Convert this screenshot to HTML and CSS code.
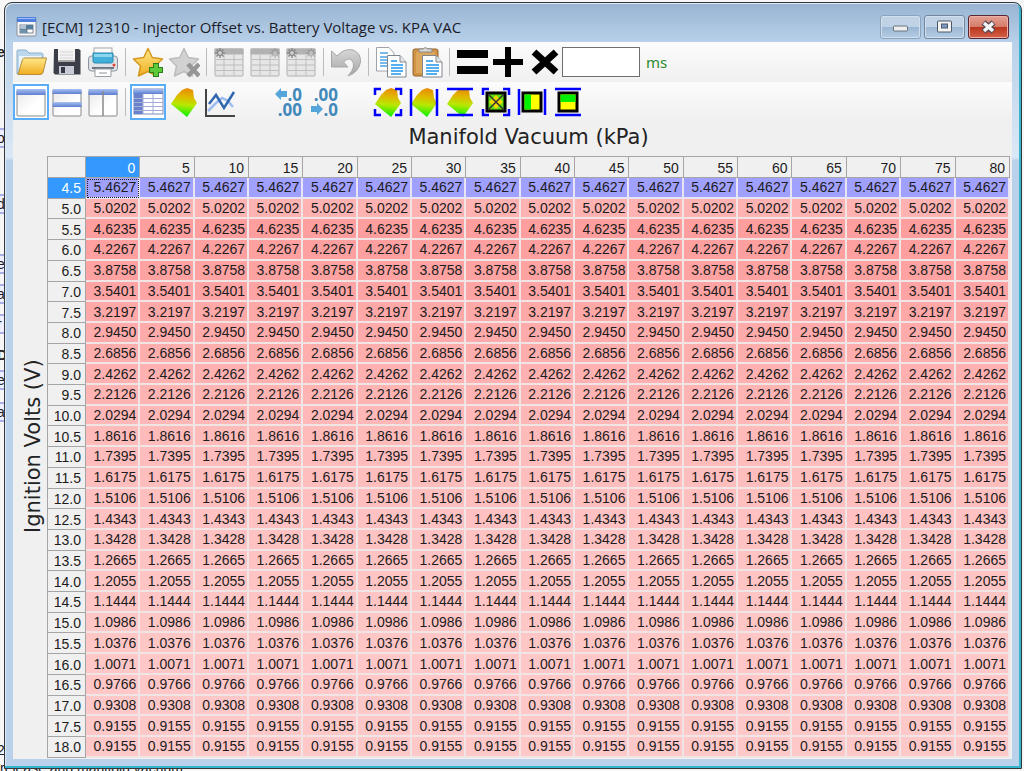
FILE: index.html
```
<!DOCTYPE html>
<html lang="en">
<head>
<meta charset="utf-8">
<title>[ECM] 12310 - Injector Offset vs. Battery Voltage vs. KPA VAC</title>
<link rel="stylesheet" href="styles.css">
</head>
<body>
<svg class="defs" aria-hidden="true">
  <defs>
    <linearGradient id="surf" x1="0.6" y1="0" x2="0.5" y2="1"><stop offset="0" stop-color="#e88a00"/><stop offset=".3" stop-color="#e0b800"/><stop offset=".58" stop-color="#b8e800"/><stop offset="1" stop-color="#00f000"/></linearGradient>
    <linearGradient id="gold" x1="0" y1="0" x2="0" y2="1"><stop offset="0" stop-color="#ffe98a"/><stop offset="1" stop-color="#f0ac20"/></linearGradient>
    <linearGradient id="blue" x1="0" y1="0" x2="0" y2="1"><stop offset="0" stop-color="#a9c0f2"/><stop offset="1" stop-color="#5d7fd0"/></linearGradient>
    <linearGradient id="grey" x1="0" y1="0" x2="0" y2="1"><stop offset="0" stop-color="#d8d8d8"/><stop offset="1" stop-color="#a4a4a4"/></linearGradient>
    <linearGradient id="page" x1="0" y1="0" x2="1" y2="1"><stop offset="0" stop-color="#e9e9e9"/><stop offset=".6" stop-color="#fff"/></linearGradient>
    <symbol id="surface" viewBox="0 0 32 32"><path d="M14 4 19 2 25 4 26 12 29 17 19 31 3 18 9 9Z" fill="url(#surf)"/></symbol>
    <symbol id="graygrid" viewBox="0 0 32 32"><rect x="2" y="3" width="28" height="27" rx="1" fill="#e6e6e6" stroke="#b0b0b0"/><rect x="1.500" y="2.500" width="29" height="6" fill="#b2b2b2"/><path d="M2 13.500H30M2 19H30M2 24.500H30M11 9V30M21 9V30" stroke="#bebebe" fill="none"/></symbol>
    <symbol id="spark" viewBox="0 0 12 12"><path d="M6 1V11M1 6H11M2.500 2.500 9.500 9.500M9.500 2.500 2.500 9.500" stroke="#8a8a8a" stroke-width="1.500"/><circle cx="6" cy="6" r="2.500" fill="#ccc" stroke="#808080"/></symbol>
    <symbol id="corners" viewBox="0 0 32 32"><path d="M3 9V3H9M23 3H29V9M29 23V29H23M9 29H3V23" fill="none" stroke="#0000ff" stroke-width="2.500"/></symbol>
  </defs>
</svg>

<div class="backdrop" aria-hidden="true">
  <span class="frag f1">e</span><span class="frag box f2">o</span><span class="frag box f3">d</span><span class="frag box f4">e</span><span class="frag box f5">a</span><span class="frag box f6">r</span><span class="frag f7">D</span><span class="frag box f8">e</span><span class="frag box f9">a</span><span class="frag f10">2</span>
  <span class="frag foot">release and manifold vacuum.</span>
</div>

<div class="window">
  <header class="titlebar">
    <svg class="appicon" viewBox="0 0 22 20"><rect x="1" y="1" width="19" height="18" rx="1" fill="#f4f6fa" stroke="#8a9098"/><rect x="1" y="0" width="19" height="5" fill="#4f7fdc"/><rect x="2" y="1" width="17" height="1" fill="#9fc0f8"/><rect x="4" y="8" width="13" height="8" fill="#fff" stroke="#7a8694"/><rect x="5" y="9" width="5" height="2" fill="#a7c4da"/><rect x="10" y="8" width="7" height="4" fill="#4f7e9e"/><rect x="4" y="12" width="7" height="4" fill="#6d93ad"/><path d="M4 12H17M11 8V16" stroke="#60788c"/></svg>
    <h1 class="title">[ECM] 12310 - Injector Offset vs. Battery Voltage vs. KPA VAC</h1>
    <div class="caption">
      <button class="cap" aria-label="Minimize"><svg viewBox="0 0 38 22"><rect x="12" y="10" width="14" height="5" rx="1" fill="#eee" stroke="#68727e"/></svg></button>
      <button class="cap" aria-label="Maximize"><svg viewBox="0 0 38 22"><rect x="12" y="5" width="14" height="11" rx="1" fill="#f4f4f4" stroke="#4e5968"/><rect x="16" y="8" width="6" height="4" fill="#7b9cc0" stroke="#4e5968"/></svg></button>
      <button class="cap close" aria-label="Close"><svg viewBox="0 0 38 22"><path d="M14 6.500 24 15.500M24 6.500 14 15.500" stroke="#5a4a55" stroke-width="6"/><path d="M14.500 7 23.500 15M23.500 7 14.500 15" stroke="#f4f4f4" stroke-width="3.500"/></svg></button>
    </div>
  </header>

  <main class="client">
    <div class="toolbar">
      <button class="tool" aria-label="Open"><svg viewBox="0 0 32 32"><path d="M2 28V5Q2 4 3 4H11L14 7H26Q28 7 28 9V26Z" fill="#bcd8ee" stroke="#8badc9"/><path d="M4 10H26V24H4Z" fill="#eaf4fb"/><path d="M3 28.500 7.500 13.500Q8 12 9.500 12H31.500L28 26.500Q27.500 28.500 25 28.500Z" fill="url(#gold)" stroke="#b78b38"/></svg></button>
      <button class="tool" aria-label="Save"><svg viewBox="0 0 32 32"><path d="M3 3H28L29.500 4.500V28.500H4L2.500 27Z" fill="#3c3f47"/><rect x="7" y="3" width="17" height="13" fill="#f4f4f4"/><path d="M9 6H22M9 9H22M9 12H22" stroke="#d4d4d4"/><path d="M7 14H24V16H7Z" fill="#aaa"/><rect x="8" y="20" width="15" height="8" fill="#c9ccd4"/><rect x="10" y="21" width="4" height="6" fill="#363944"/></svg></button>
      <button class="tool" aria-label="Print"><svg viewBox="0 0 32 32"><rect x="7" y="2" width="18" height="10" fill="#fafafa" stroke="#a8a8a8"/><rect x="1.500" y="10" width="29" height="15" rx="3" fill="#dfe2e6" stroke="#8c949e"/><path d="M6 7H26V15Q26 17 24 17H8Q6 17 6 15Z" fill="#42b0d8" stroke="#298aae"/><path d="M7 8H25V11H7Z" fill="#8bd5ef"/><circle cx="27" cy="19" r="1.500" fill="#e04030"/><path d="M5 22H27" stroke="#6b7480" stroke-width="2"/><path d="M8 23H24V30.500H8Z" fill="#fff" stroke="#9a9fa6"/><path d="M12 27H20" stroke="#8c949e"/></svg></button>
      <span class="sep"></span>
      <button class="tool" aria-label="Add favorite"><svg viewBox="0 0 32 32"><path d="M16 2.500 20.300 11.500 30.500 13 23 20 24.500 30 16 25.500 6.500 30 8.500 20 1.500 13 11.700 11.500Z" fill="url(#gold)" stroke="#d49a20" stroke-width="1.500" stroke-linejoin="round"/><path d="M24 17V31M17 24H31" stroke="#2b7d1c" stroke-width="6"/><path d="M24 18V30M18 24H30" stroke="#5cc83a" stroke-width="4"/></svg></button>
      <button class="tool" aria-label="Remove favorite"><svg viewBox="0 0 32 32"><path d="M16 2.500 20.300 11.500 30.500 13 23 20 24.500 30 16 25.500 6.500 30 8.500 20 1.500 13 11.700 11.500Z" fill="#d2d2d2" stroke="#bcbcbc" stroke-width="1.500" stroke-linejoin="round"/><path d="M20 18 31 30M31 18 20 30" stroke="#969696" stroke-width="4.500"/></svg></button>
      <span class="sep"></span>
      <button class="tool" aria-label="Insert before"><svg viewBox="0 0 32 32"><use href="#graygrid"/><use href="#spark" x="1" y="1" width="12" height="12"/></svg></button>
      <button class="tool" aria-label="Insert after"><svg viewBox="0 0 32 32"><use href="#graygrid"/><use href="#spark" x="20" y="1" width="12" height="12" opacity=".5"/></svg></button>
      <button class="tool" aria-label="Insert both"><svg viewBox="0 0 32 32"><use href="#graygrid"/><use href="#spark" x="1" y="1" width="12" height="12"/><use href="#spark" x="20" y="1" width="12" height="12" opacity=".5"/></svg></button>
      <span class="sep"></span>
      <button class="tool" aria-label="Undo"><svg viewBox="0 0 32 32"><path d="M1.500 5 7 10Q14 2 23 4 31 7 30.500 16 29 26 18 30 27 20 21.500 14 18 11.500 13.500 16L18 21H1.500Z" fill="url(#grey)" stroke="#a8a8a8"/></svg></button>
      <span class="sep"></span>
      <button class="tool" aria-label="Copy"><svg viewBox="0 0 32 32"><path d="M1.500 1.500H14L19 7V25H1.500Z" fill="#fff" stroke="#a0a4aa"/><path d="M5 7H13M5 11H16M5 14H16M5 17H14M5 20H14" stroke="#78b8e8" stroke-width="2"/><path d="M12.500 9.500H25L31 16V31H12.500Z" fill="#fff" stroke="#80868e"/><path d="M25 9.500V16H31" fill="#e4e6e8" stroke="#80868e"/><path d="M16 15H22M16 19H28M16 22H28M16 25H28M16 28H26" stroke="#55aef0" stroke-width="2"/></svg></button>
      <button class="tool" aria-label="Paste"><svg viewBox="0 0 32 32"><rect x="2" y="3" width="25" height="27" rx="2" fill="#cf9446" stroke="#94622a"/><rect x="5" y="6" width="19" height="21" fill="#dba75c"/><path d="M8 6V3H12Q14 0 17 3H21V6Z" fill="#d8d8d8" stroke="#888"/><path d="M11.500 9.500H25L31 16V31H11.500Z" fill="#fff" stroke="#80868e"/><path d="M25 9.500V16H31" fill="#e4e6e8" stroke="#80868e"/><path d="M15 15H22M15 19H28M15 22H28M15 25H28M15 28H26" stroke="#55aef0" stroke-width="2"/></svg></button>
      <span class="sep"></span>
      <button class="tool" aria-label="Set equal"><svg viewBox="0 0 32 32"><path d="M1 4H32V12H1ZM1 20H32V28H1Z"/></svg></button>
      <button class="tool" aria-label="Add"><svg viewBox="0 0 32 32"><path d="M13 1H19V13H31V19H19V31H13V19H1V13H13Z"/></svg></button>
      <button class="tool" aria-label="Multiply"><svg viewBox="0 0 32 32"><path d="M6 6 28 26M28 6 6 26" stroke="#000" stroke-width="7"/></svg></button>
      <input class="amount" id="amount" type="text">
      <label class="unit" for="amount">ms</label>
    </div>

    <div class="toolbar views">
      <button class="tool on" aria-label="Single pane"><svg viewBox="0 0 32 32"><rect x="2" y="4" width="28" height="26" rx="1" fill="url(#page)" stroke="#888"/><rect x="1.500" y="3" width="29" height="6" fill="url(#blue)"/></svg></button>
      <button class="tool" aria-label="Horizontal panes"><svg viewBox="0 0 32 32"><rect x="2" y="4" width="28" height="26" rx="1" fill="url(#page)" stroke="#888"/><rect x="1.500" y="3" width="29" height="5" fill="url(#blue)"/><rect x="1.500" y="16" width="29" height="5" fill="url(#blue)"/></svg></button>
      <button class="tool" aria-label="Vertical panes"><svg viewBox="0 0 32 32"><rect x="2" y="4" width="28" height="26" rx="1" fill="url(#page)" stroke="#888"/><rect x="1.500" y="3" width="29" height="6" fill="url(#blue)"/><path d="M16 5V30" stroke="#888" stroke-width="1.500"/></svg></button>
      <span class="sep"></span>
      <button class="tool on" aria-label="Table view"><svg viewBox="0 0 32 32"><rect x="2" y="3" width="29" height="25" fill="#fff" stroke="#7d87b8"/><path d="M1.500 3H31V8H1.500Z" fill="url(#blue)"/><path d="M2 8H11V28H2Z" fill="#6a82cc"/><path d="M2 12.500H31M2 16.500H31M2 20.500H31M2 24.500H31M11 8V28M21 8V28" stroke="#a4acd4"/></svg></button>
      <button class="tool" aria-label="Surface view"><svg viewBox="0 0 32 32"><use href="#surface"/></svg></button>
      <button class="tool" aria-label="Chart view"><svg viewBox="0 0 32 32"><path d="M4 25 12 17 18 12 24 15 29 21" fill="none" stroke="#9dbdf0" stroke-width="2.500"/><path d="M5 18 12 9 20 22 30 6" fill="none" stroke="#2f66ae" stroke-width="2.500"/><path d="M2 3V30H31" fill="none" stroke="#444" stroke-width="2"/></svg></button>
      <span class="gap"></span>
      <button class="tool decimals" aria-label="Fewer decimals"><span><svg class="arrow" viewBox="0 0 12 12"><path d="M0 6 6 0V3H12V9H6V12Z" fill="#56a5da"/></svg>.0</span><span>.00</span></button>
      <button class="tool decimals" aria-label="More decimals"><span>.00</span><span><svg class="arrow" viewBox="0 0 12 12"><path d="M12 6 6 0V3H0V9H6V12Z" fill="#56a5da"/></svg>.0</span></button>
      <span class="gap"></span>
      <button class="tool" aria-label="Smooth all"><svg viewBox="0 0 32 32"><use href="#surface"/><use href="#corners"/></svg></button>
      <button class="tool" aria-label="Smooth across"><svg viewBox="0 0 32 32"><use href="#surface"/><path d="M3 3V30M29 3V30" stroke="#0000ff" stroke-width="2.500"/></svg></button>
      <button class="tool" aria-label="Smooth down"><svg viewBox="0 0 32 32"><use href="#surface"/><path d="M3 3H29M3 29H29" stroke="#0000ff" stroke-width="2.500"/></svg></button>
      <button class="tool" aria-label="Interpolate all"><svg viewBox="0 0 32 32"><use href="#corners"/><rect x="7" y="7" width="18" height="18" fill="#60e010" stroke="#000" stroke-width="3"/><path d="M16 9 23 16 16 23 9 16Z" fill="#f0d800"/><path d="M8 8 24 24M24 8 8 24" stroke="#333" stroke-width="1.500"/></svg></button>
      <button class="tool" aria-label="Interpolate across"><svg viewBox="0 0 32 32"><path d="M3 3V29M29 3V29" stroke="#0000ff" stroke-width="2.500"/><rect x="7" y="7" width="18" height="18" fill="#ff0" stroke="#000" stroke-width="3"/><path d="M8.500 8.500H15V23.500H8.500Z" fill="#00f000"/></svg></button>
      <button class="tool" aria-label="Interpolate down"><svg viewBox="0 0 32 32"><path d="M3 3H29M3 29H29" stroke="#0000ff" stroke-width="2.500"/><rect x="7" y="7" width="18" height="18" fill="#ff0" stroke="#000" stroke-width="3"/><path d="M8.500 8.500H23.500V16H8.500Z" fill="#00f000"/></svg></button>
    </div>

    <div class="sheet">
      <div class="yaxis">Ignition Volts (V)</div>
      <div class="plot">
        <h2 class="xaxis">Manifold Vacuum (kPa)</h2>
        <table class="grid">
          <colgroup id="cols"><col class="rowhead"></colgroup>
          <thead><tr id="head"><td class="corner"></td></tr></thead>
          <tbody id="body"></tbody>
        </table>
      </div>
    </div>
  </main>
</div>
<script src="table.js"></script>
</body>
</html>
```
FILE: styles.css
```
* { box-sizing: border-box; }

body {
  margin: 0;
  height: 100vh;
  padding: 2px 2px 2px 4px;
  background: #f6f6f6;
  font-family: "Liberation Sans", Arial, sans-serif;
  overflow: hidden;
}

.defs { position: absolute; width: 0; height: 0; }

/* Sliver of the parent window that shows past the frame */
.backdrop { position: absolute; inset: 0; overflow: hidden; z-index: -1; font-size: 14px; color: #222; }
.frag { position: absolute; left: -3px; height: 20px; line-height: 20px; }
.box { width: 12px; background: #eef0ff; border: solid #a9aee6; border-width: 2px 0; line-height: 16px; }
.f1 { top: 42px; font-weight: bold; }
.f2 { top: 128px; }
.f3 { top: 194px; }
.f4 { top: 254px; }
.f5 { top: 284px; }
.f6 { top: 314px; }
.f7 { top: 345px; font-weight: bold; }
.f8 { top: 370px; }
.f9 { top: 402px; }
.f10 { top: 740px; }
.foot { left: 0; top: 758px; }

.window {
  height: 100%;
  display: flex;
  flex-direction: column;
  padding: 0 9px 9px 8px;
  border: 1px solid #33383c;
  border-radius: 8px 8px 0 0;
  background: linear-gradient(#98b4d2, #b9d1ea 40px, #c9dcef 90px, #dbe8f6 154px, #b9d1ea 158px);
  box-shadow: inset -2px -2px 0 #35b4cc, inset 1px 1px 0 #dfeaf5;
}

.titlebar { flex: none; height: 39px; display: flex; align-items: center; padding: 8px 3px 0 3px; }
.appicon { width: 22px; height: 20px; flex: none; }
.title {
  flex: 1;
  margin: 0 0 0 4px;
  font: 15px/20px "Open Sans", "Noto Sans", sans-serif;
  color: #1c1c28;
  white-space: nowrap;
}
.caption { display: flex; gap: 3px; }
.cap {
  width: 41px;
  height: 24px;
  padding: 0;
  border: 1px solid #74869c;
  border-radius: 3px;
  background: linear-gradient(#bfd2e6 48%, #9bb6d2 50%, #b5cde6);
  box-shadow: inset 0 0 0 1px #d2e0ee;
}
.cap:first-child { border-color: #8ca3bd; }
.cap svg { display: block; width: 100%; height: 22px; }
.close {
  border-color: #5b2733;
  background: linear-gradient(#e3a195, #d67c6a 48%, #b8351b 50%, #d4614a);
  box-shadow: inset 0 0 0 1px #eeb0a4;
}

.client { flex: 1; min-height: 0; display: flex; flex-direction: column; background: #f0f0f0; }

.toolbar {
  flex: none;
  height: 40px;
  display: flex;
  align-items: center;
  background: linear-gradient(#fcfcfc, #f0f0f0);
}
.views { height: 39px; }
.tool {
  width: 36px;
  height: 36px;
  flex: none;
  padding: 1px;
  border: 1px solid transparent;
  background: none;
}
.tool svg { display: block; width: 32px; height: 32px; }
.on { border: 2px solid #5aaef8; padding: 0; background: #fff; }
.sep { width: 9px; height: 28px; background: linear-gradient(#bcbcbc, #bcbcbc) center / 1px 100% no-repeat; }
.gap { width: 30px; }
.decimals {
  display: flex;
  flex-direction: column;
  align-items: flex-end;
  justify-content: center;
  font: bold 17px/15px "Noto Sans", sans-serif;
  color: #4289bb;
}
.decimals span { display: flex; align-items: center; }
.tool .arrow { width: 12px; height: 12px; }

.amount { width: 78px; height: 30px; margin: 0 6px 0 0; border: 1px solid #6e6e6e; background: #fff; font: inherit; }
.unit { font: 15px/20px "Noto Sans", sans-serif; color: #2c8a2c; }

.sheet { flex: 1; min-height: 0; display: flex; }
.yaxis {
  width: 34px;
  writing-mode: vertical-rl;
  transform: rotate(180deg);
  text-align: center;
  padding: 0 6px 12px 0;
  font: 21px/28px "DejaVu Sans", sans-serif;
  color: #222;
}
.plot { flex: 1; min-width: 0; display: flex; flex-direction: column; padding: 0 2px 1px 0; }
.xaxis { flex: none; margin: 0; height: 35px; text-align: center; font: 21px/32px "DejaVu Sans", sans-serif; color: #222; }

.grid {
  flex: 1;
  width: 100%;
  table-layout: fixed;
  border-collapse: separate;
  border-spacing: 0;
  border: solid #a5a5a5;
  border-width: 1px 0 0 1px;
  font-size: 14px;
  line-height: 18px;
  color: #1c1c1c;
}
.rowhead { width: 38px; }
.grid th, .grid td {
  padding: 0 2px 0 0;
  text-align: right;
  font-weight: normal;
  border: solid #f0e4e4;
  border-width: 0 2px 2px 0;
}
.grid th, .grid .corner { border: solid #a5a5a5; border-width: 0 1px 1px 0; background: #f0f0f0; }
.grid th { padding: 1px 4px 0 0; }
.grid thead th { height: 21px; }
.grid .current { background: #3399ff; color: #fff; }
.grid .selected { background: #a0a0ff; border-color: #e8e4f4; }
.grid .focus { outline: 1px dotted #222; outline-offset: -2px; }
```
FILE: table.js
```
const kpa = Array.from({ length: 17 }, (_, i) => i * 5);
const offsets = [
  5.4627, 5.0202, 4.6235, 4.2267, 3.8758, 3.5401, 3.2197, 2.9450, 2.6856, 2.4262,
  2.2126, 2.0294, 1.8616, 1.7395, 1.6175, 1.5106, 1.4343, 1.3428, 1.2665, 1.2055,
  1.1444, 1.0986, 1.0376, 1.0071, 0.9766, 0.9308, 0.9155, 0.9155
];
// Green and blue channel of each row's heat colour
const shades = [
  160, 178, 158, 160, 162, 164, 168, 171, 174, 177,
  180, 183, 186, 188, 190, 191, 193, 194, 195, 196,
  197, 198, 198, 199, 199, 200, 200, 200
];

const cell = (row, tag, text, cls) => {
  const el = document.createElement(tag);
  el.textContent = text;
  if (cls) el.className = cls;
  row.append(el);
  return el;
};

const head = document.getElementById("head");
const cols = document.getElementById("cols");
kpa.forEach((k, c) => {
  cols.append(document.createElement("col"));
  cell(head, "th", k, c === 0 ? "current" : "").scope = "col";
});

const body = document.getElementById("body");
offsets.forEach((value, r) => {
  const row = document.createElement("tr");
  cell(row, "th", (4.5 + r * 0.5).toFixed(1), r === 0 ? "current" : "").scope = "row";
  kpa.forEach((_, c) => {
    const td = cell(row, "td", value.toFixed(4), r === 0 ? (c === 0 ? "selected focus" : "selected") : "");
    if (r > 0) td.style.backgroundColor = `rgb(255, ${shades[r]}, ${shades[r]})`;
  });
  body.append(row);
});
```
